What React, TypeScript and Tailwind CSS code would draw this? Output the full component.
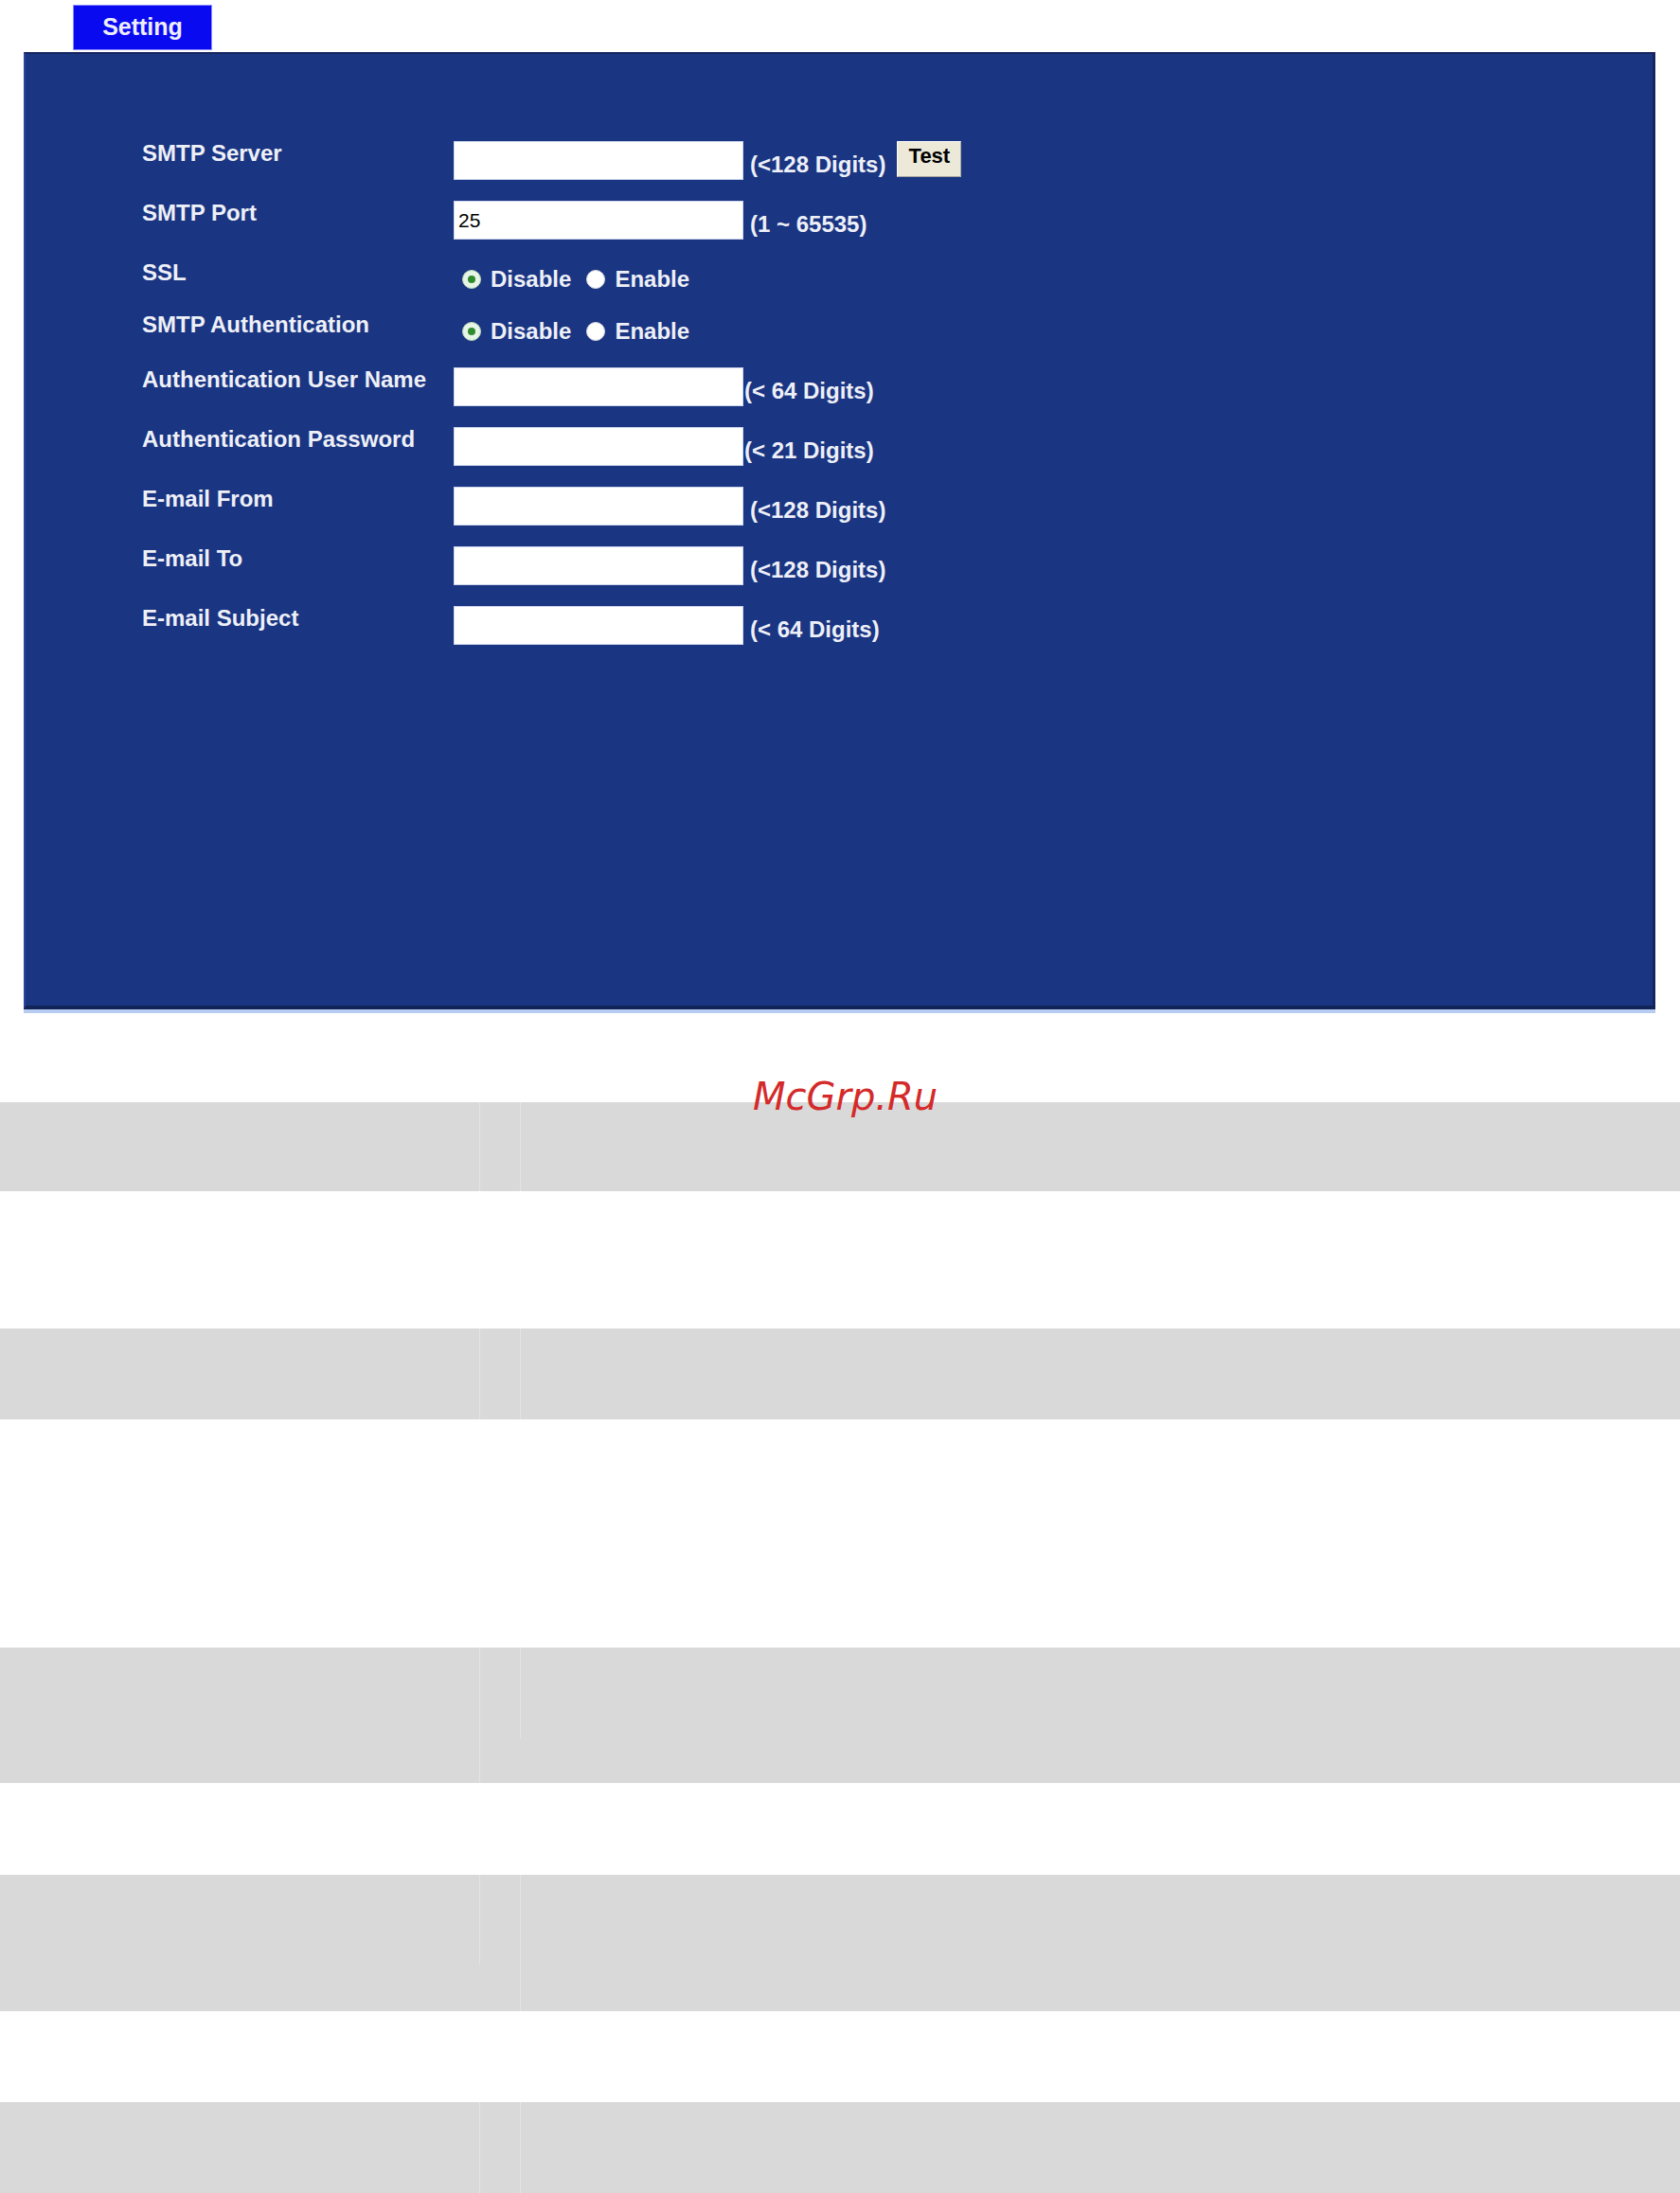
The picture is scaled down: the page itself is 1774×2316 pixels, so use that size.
const txt = "text-[24px] leading-[24px] font-bold text-[#eef0f8] whitespace-nowrap";

function Field({ label, hint, value, hintGap = "ml-[7px]", test }: { label: string; hint: string; value?: string; hintGap?: string; test?: boolean }) {
  return (
    <div className="flex h-[41px]">
      <div className={`w-[329px] pt-[1px] ${txt}`}>{label}</div>
      <div className="flex items-end">
        <div className="flex h-[41px] w-[306px] items-center border border-[#cdd6ee] bg-white pl-[4px] text-[21px] text-black">
          {value}
        </div>
        <span className={`mb-[4px] ${hintGap} ${txt}`}>{hint}</span>
        {test && (
          <div className="mb-[1px] ml-[12px] flex h-[38px] w-[68px] justify-center self-start border border-[#a8a8a0] border-t-[#fafafa] border-l-[#fafafa] bg-[#ece9d8] pt-[4px] text-[22px] font-bold leading-[22px] text-black">
            Test
          </div>
        )}
      </div>
    </div>
  );
}

function Radio({ checked }: { checked?: boolean }) {
  return (
    <span
      className={`flex h-[20px] w-[20px] items-center justify-center rounded-full border ${
        checked ? "border-[#b8d8b8] bg-[#e6f5e6]" : "border-[#d8d8e0] bg-white"
      }`}
    >
      {checked && <span className="h-[8px] w-[8px] rounded-full bg-[#2e8b2e]" />}
    </span>
  );
}

function RadioRow({ label, h }: { label: string; h: string }) {
  return (
    <div className={`flex ${h}`}>
      <div className={`w-[329px] pt-[1px] ${txt}`}>{label}</div>
      <div className="ml-[9px] mt-[10px] flex h-[20px] items-center">
        <Radio checked />
        <span className={`ml-[10px] ${txt}`}>Disable</span>
        <span className="ml-[16px]">
          <Radio />
        </span>
        <span className={`ml-[10px] ${txt}`}>Enable</span>
      </div>
    </div>
  );
}

function GrayRow({ h, leftLine = "h-full", rightLine = "h-full" }: { h: string; leftLine?: string; rightLine?: string }) {
  return (
    <div className={`flex w-full bg-[#d9d9d9] ${h}`}>
      <div className="w-[506px]" />
      <div className="w-px">
        <div className={`bg-[#e4e4e4] ${leftLine}`} />
      </div>
      <div className="w-[42px]" />
      <div className="w-px">
        <div className={`bg-[#e4e4e4] ${rightLine}`} />
      </div>
      <div className="flex-1" />
    </div>
  );
}

export default function App() {
  return (
    <div className="relative h-[2316px] w-[1774px] overflow-hidden bg-white pt-[5px] font-['Liberation_Sans',Arial,sans-serif]">
      <div className="ml-[77px] flex h-[48px] w-[147px] items-center justify-center border border-[#8c8cff] bg-[#0a0af0] text-[25px] font-bold text-[#eeeeff]">
        Setting
      </div>

      <div className="ml-[25px] mt-[2px] h-[1011px] w-[1723px] border-t-2 border-r-[3px] border-b-[4px] border-l-2 border-t-[#14245e] border-r-[#15255c] border-b-[#122357] border-l-[#2b43a0] bg-[#1a3582] pl-[123px] pt-[92px] shadow-[0_4px_0_#b6ccf0]">
        <div className="flex flex-col gap-[22px]">
          <Field label="SMTP Server" hint="(<128 Digits)" test />
          <Field label="SMTP Port" hint="(1 ~ 65535)" value="25" />
          <RadioRow label="SSL" h="h-[33px]" />
          <RadioRow label="SMTP Authentication" h="h-[36px]" />
          <Field label="Authentication User Name" hint="(< 64 Digits)" hintGap="ml-px" />
          <Field label="Authentication Password" hint="(< 21 Digits)" hintGap="ml-px" />
          <Field label="E-mail From" hint="(<128 Digits)" />
          <Field label="E-mail To" hint="(<128 Digits)" />
          <Field label="E-mail Subject" hint="(< 64 Digits)" />
        </div>
      </div>

      <div className="mt-[98px]">
        <GrayRow h="h-[94px]" />
        <div className="h-[145px]" />
        <GrayRow h="h-[96px]" />
        <div className="h-[241px]" />
        <GrayRow h="h-[143px]" rightLine="h-[96px]" />
        <div className="h-[97px]" />
        <GrayRow h="h-[144px]" leftLine="h-[95px]" />
        <div className="h-[96px]" />
        <GrayRow h="h-[100px]" />
      </div>

      <div className="absolute left-[795px] top-[1138px] font-['DejaVu_Sans',sans-serif] text-[40px] italic leading-none text-[#d42a2a]">
        McGrp.Ru
      </div>
    </div>
  );
}
